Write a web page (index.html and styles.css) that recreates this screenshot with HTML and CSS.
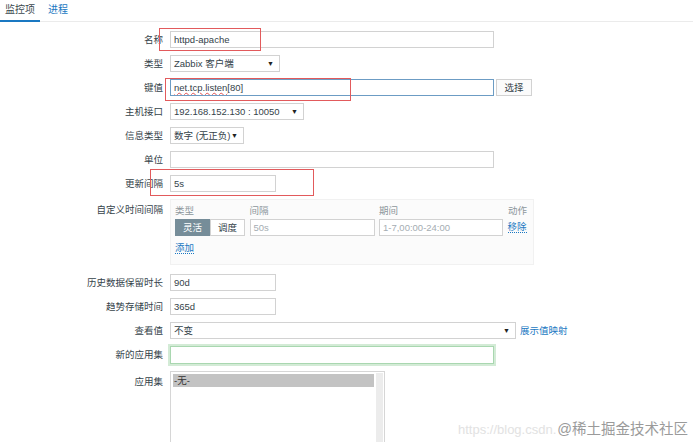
FILE: index.html
```html
<!DOCTYPE html>
<html lang="zh-CN">
<head>
  <meta charset="UTF-8" />
  <title>监控项</title>
  <link rel="stylesheet" href="styles.css">
</head>
<body>
  <div class="page">
    <div class="tabs">
      <span class="tab active">监控项</span>
      <span class="tab link">进程</span>
    </div>

    <div class="form">
      <label>名称</label>
      <div class="field"><div class="input wide">httpd-apache</div></div>

      <label>类型</label>
      <div class="field"><div class="select w110">Zabbix 客户端<span class="arrow">▼</span></div></div>

      <label>键值</label>
      <div class="field">
        <div class="input wide focus"><span class="squiggle">net.tcp.listen</span>[80]</div>
        <div class="btn">选择</div>
      </div>

      <label>主机接口</label>
      <div class="field"><div class="select w134">192.168.152.130 : 10050<span class="arrow">▼</span></div></div>

      <label>信息类型</label>
      <div class="field"><div class="select w74">数字 (无正负)<span class="arrow">▼</span></div></div>

      <label>单位</label>
      <div class="field"><div class="input wide"></div></div>

      <label>更新间隔</label>
      <div class="field"><div class="input small">5s</div></div>

      <label class="top">自定义时间间隔</label>
      <div class="field">
        <div class="intervals">
          <span class="head">类型</span>
          <span class="head">间隔</span>
          <span class="head">期间</span>
          <span class="head">动作</span>

          <div class="toggle"><span class="on">灵活</span><span class="off">调度</span></div>
          <div class="input muted">50s</div>
          <div class="input muted">1-7,00:00-24:00</div>
          <a class="act">移除</a>

          <a class="act add">添加</a>
        </div>
      </div>

      <label>历史数据保留时长</label>
      <div class="field"><div class="input small">90d</div></div>

      <label>趋势存储时间</label>
      <div class="field"><div class="input small">365d</div></div>

      <label>查看值</label>
      <div class="field">
        <div class="select w346">不变<span class="arrow">▼</span></div>
        <a class="map">展示值映射</a>
      </div>

      <label>新的应用集</label>
      <div class="field"><div class="input wide green"></div></div>

      <label class="top">应用集</label>
      <div class="field">
        <div class="listbox">
          <div class="options"><div class="opt sel">-无-</div></div>
          <div class="track"></div>
        </div>
      </div>
    </div>

    <!-- 标注框 -->
    <div class="mark m1"></div>
    <div class="mark m2"></div>
    <div class="mark m3"></div>

    <div class="watermark"><span class="url">https://blog.csdn.</span><span class="brand">@稀土掘金技术社区</span></div>
  </div>
</body>
</html>
```

FILE: styles.css
```css
* { box-sizing: border-box; }
body {
  margin: 0;
  background: #fff;
  color: #35434a;
  font-family: "Liberation Sans", "Noto Sans CJK SC", sans-serif;
  font-size: 9.5px;
}
.page {
  position: relative;
  width: 693px;
  height: 442px;
  overflow: hidden;
}

.tabs {
  display: flex;
  gap: 3px;
  height: 22px;
  border-bottom: 1px solid #ebebeb;
}
.tab {
  font-size: 10px;
  padding: 0 5px;
  height: 22px;
  line-height: 20px;
}
.tab.active { border-bottom: 2px solid #1a78c2; margin-bottom: -1px; color: #3a474e; }
.tab.link { color: #1a78c2; }

.form {
  display: grid;
  grid-template-columns: 163px 1fr;
  column-gap: 7px;
  row-gap: 7px;
  padding-top: 9px;
}
.form label {
  text-align: right;
  line-height: 17px;
  height: 17px;
  white-space: nowrap;
}
.form label.top { line-height: 21px; }
.field {
  display: flex;
  align-items: flex-start;
  gap: 2px;
  min-height: 17px;
}

.input, .select {
  height: 17px;
  line-height: 15px;
  border: 1px solid #d2d2d2;
  background: #fff;
  padding: 0 3px;
  white-space: nowrap;
  overflow: hidden;
}
.wide { width: 324px; }
.small { width: 106px; }
.input.focus { border-color: #6c9cc4; }
.input.green {
  height: 18px;
  border-color: #a9d7b0;
  box-shadow: 0 0 0 2px #d3ebd6;
}
.input.muted { color: #a5adb2; width: 100%; }
.squiggle {
  text-decoration: underline wavy #e05050;
  text-decoration-thickness: 1px;
  text-underline-offset: 1px;
}

.select { position: relative; padding-right: 14px; }
.select .arrow {
  position: absolute;
  right: 5px;
  top: 0;
  font-size: 7px;
  color: #222;
}
.w110 { width: 110px; }
.w134 { width: 134px; }
.w74 { width: 74px; }
.w346 { width: 346px; }

.btn {
  width: 36px;
  height: 17px;
  line-height: 15px;
  text-align: center;
  border: 1px solid #d2d2d2;
  background: #fbfbfb;
}
.map { color: #1a78c2; line-height: 17px; margin-left: 2px; }

.intervals {
  width: 364px;
  height: 66px;
  margin-bottom: 2px;
  background: #fbfbfb;
  border: 1px solid #f1f1f1;
  padding: 3px 4px 0;
  display: grid;
  grid-template-columns: 70px 125px 124px auto;
  grid-template-rows: 15px 17px 20px;
  column-gap: 4.5px;
  row-gap: 1px;
}
.head { color: #8d979c; line-height: 15px; }
.head:last-of-type { text-align: right; padding-right: 2px; }
.toggle { display: flex; height: 17px; }
.toggle span {
  width: 35px;
  text-align: center;
  line-height: 15px;
  border: 1px solid #d2d2d2;
}
.toggle .on { background: #768d99; border-color: #768d99; color: #fff; }
.toggle .off { background: #fff; }
.act {
  color: #1a78c2;
  line-height: 15px;
  justify-self: start;
  border-bottom: 1px dotted #1a78c2;
  height: 14px;
}
.add { grid-column: 1; align-self: center; }

.listbox {
  display: flex;
  width: 215px;
  height: 90px;
  border: 1px solid #d6d6d6;
  background: #fff;
}
.options { flex: 1; padding: 2px 2px 0 2px; }
.opt { height: 13px; line-height: 13px; padding-left: 1px; }
.opt.sel { background: #c3c3c3; color: #333; }
.track { width: 7px; margin: 1px 1px 0 0; background: #ececec; }

.mark {
  position: absolute;
  border: 1px solid #e25a5c;
}
.m1 { left: 159px; top: 28px; width: 102px; height: 23px; }
.m2 { left: 165px; top: 78px; width: 186px; height: 23px; }
.m3 { left: 150px; top: 169px; width: 164px; height: 27px; }

.watermark {
  position: absolute;
  right: 5px;
  bottom: 4px;
  display: flex;
  align-items: baseline;
  white-space: nowrap;
}
.url {
  color: #e2e2e2;
  font-size: 13px;
  margin-right: 1px;
}
.brand {
  color: #9a9a9a;
  font-size: 14.5px;
  text-shadow: 0 0 2px #fff, 0 0 2px #fff, 0 0 2px #fff;
}
```
